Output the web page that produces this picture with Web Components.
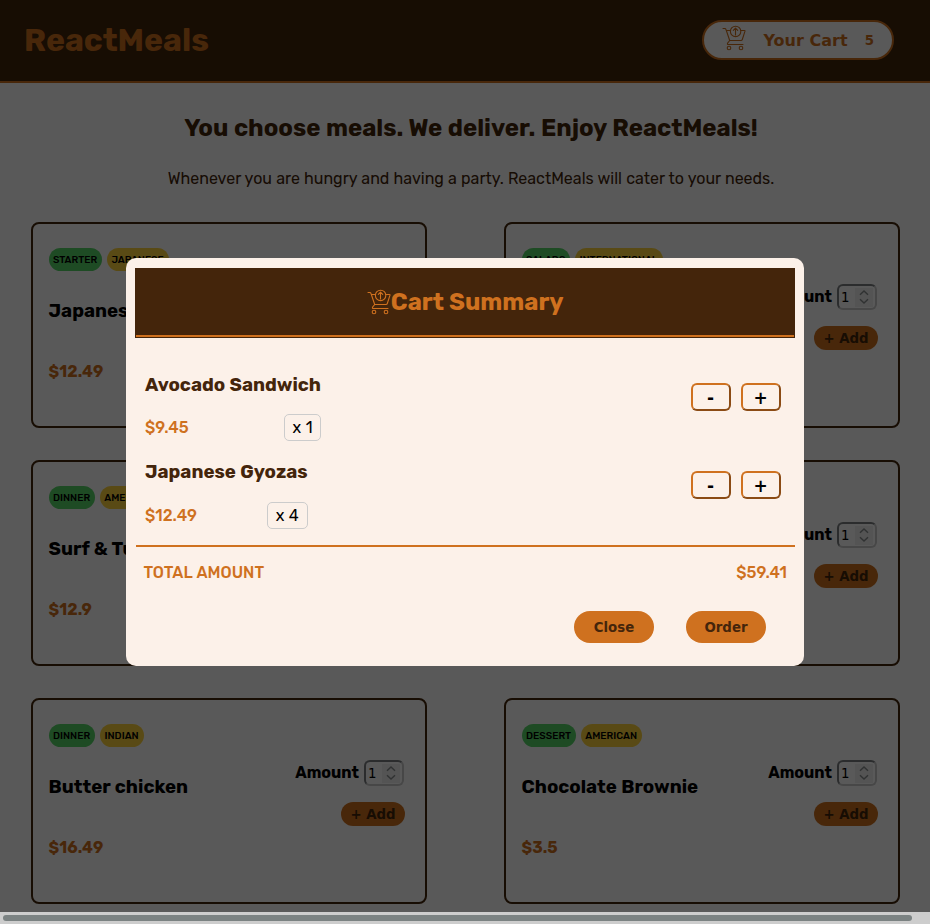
<!DOCTYPE html>
<html lang="en">
<head>
<meta charset="utf-8">
<title>ReactMeals</title>
<style>
html,body{margin:0;height:100%;overflow:hidden;background:#fff}
body{font-family:Rubik,Roboto,sans-serif;font-size:16px;line-height:1;--orange:#cf711f;--brown:#44250b;--cream:#fcf1e9;--ui:"DejaVu Sans",sans-serif}
</style>
</head>
<body>
<meals-app></meals-app>
<script>
const define=(name,html,after)=>{
  const t=document.createElement('template');
  t.innerHTML='<style>*{box-sizing:border-box}</style>'+html;
  customElements.define(name,class extends HTMLElement{
    constructor(){super();this.attachShadow({mode:'open'}).append(t.content.cloneNode(true));}
    connectedCallback(){if(after)after.call(this,this.shadowRoot);}
  });
};

define('cart-icon',`<style>:host{display:block;width:24px;height:26px;color:var(--orange);flex:none}svg{display:block}</style>
<svg width="24" height="26" viewBox="0 0 24 26" fill="none" stroke="currentColor" stroke-width="1.1" stroke-linecap="round" stroke-linejoin="round">
<path d="M1 3.5h1.7q1 0 1.3 1L7.7 15.5H19q1 0 1.3-1L23 6.2q.2-.7-.7-.7H19M4.4 5.5H8.3M7.7 15.5 5.6 18.2q-.6 1.3.7 1.3H21"/>
<circle cx="13.6" cy="6.4" r="5.2"/><path d="M13.5 9.9V3.4M11.3 5.4l2.2-2.2 2.2 2.2"/><circle cx="7" cy="23" r="1.8"/><circle cx="19" cy="23" r="1.8"/></svg>`);

define('meal-tag',`<style>:host{display:flex;height:23px;border-radius:12px;align-items:center;justify-content:center;background:#56d667;font-size:10px;font-weight:500;color:#000;white-space:nowrap}:host([kind=cuisine]){background:#ffd53c}</style><slot></slot>`);

define('amount-field',`<style>:host{display:flex;align-items:center;gap:5px;font-weight:700;color:#000}
.box{width:40px;height:26px;border:2px solid;border-color:#7b7f80 #cbcbcb #cbcbcb #7b7f80;border-radius:6px;display:flex;align-items:center;justify-content:space-between;padding:0 2px;font:13.333px var(--ui)}
.spin{width:18px;height:19px;background:#efefef;display:grid;place-items:center}</style>
<span>Amount</span><div class="box"><span>1</span><div class="spin"><svg width="10" height="14" viewBox="0 0 10 14" fill="none" stroke="#8b9091" stroke-width="1.4"><path d="M1 4.8 5 1l4 3.8M1 9.2 5 13l4-3.8"/></svg></div></div>`);

define('meal-card',`<style>:host{display:flex;justify-content:space-between;height:206px;border:2px solid var(--brown);border-radius:8px;background:#fff;padding:24px 20px 0 15.6px;box-sizing:border-box;white-space:nowrap}
.tags{display:flex;gap:5px}.name{font-size:18.72px;font-weight:700;color:#000;margin-top:30px;line-height:20px;word-spacing:.4px}.price{font-weight:700;color:var(--orange);margin-top:41px;line-height:20px;font-size:16px}
.side{display:flex;flex-direction:column;align-items:flex-end;padding-top:36px;gap:16px}amount-field{margin-right:1px}
button{width:64px;height:24px;border:0;border-radius:12px;background:var(--orange);color:var(--brown);font:700 13.333px/1 var(--ui);padding:1px 0 0;white-space:nowrap}</style>
<div><div class="tags"></div><div class="name"></div><div class="price"></div></div>
<div class="side"><amount-field></amount-field><button>+ Add</button></div>`,function(r){
  const [course,cw,cuisine,uw,name,price]=this.getAttribute('meal').split('|');
  const tag=(text,w,k)=>`<meal-tag kind="${k}" style="width:${w}px">${text}</meal-tag>`;
  r.querySelector('.tags').innerHTML=tag(course,cw,'course')+tag(cuisine,uw,'cuisine');
  r.querySelector('.name').textContent=name;
  r.querySelector('.price').textContent=price;
});

define('site-header',`<style>:host{display:flex;justify-content:space-between;align-items:center;height:83px;padding:0 36px 1px 24px;background:var(--brown);border-bottom:2px solid var(--orange);box-sizing:border-box;color:var(--orange)}
h1{margin:0;font-size:32px;line-height:36px}
button{width:192px;height:40px;border:2px solid var(--orange);border-radius:20px;background:#fff;color:inherit;display:flex;align-items:center;padding:0 18px;font:700 16px/1 var(--ui)}
.t{margin-left:17.5px;flex:1;text-align:left;padding-top:1px}.n{font-size:13.333px;padding-top:1px}cart-icon{margin-bottom:5px}</style>
<h1>ReactMeals</h1><button><cart-icon></cart-icon><span class="t">Your Cart</span><span class="n">5</span></button>`);

define('cart-row',`<style>:host{display:flex;justify-content:space-between;height:88px;padding:0 14px 0 9px;box-sizing:border-box;white-space:nowrap}
.name{font-size:18.72px;font-weight:700;color:var(--brown);height:20px;line-height:20px;padding-top:1px;word-spacing:.4px}
:host(:last-child) .name{padding-top:0}
.line{display:flex;justify-content:space-between;align-items:center;margin-top:20px}.price{font-size:16px;font-weight:500;color:var(--orange)}
.qty{height:27px;border:1px solid #ccc;border-radius:5px;display:flex;align-items:center;justify-content:center;font-size:16px;color:#000;word-spacing:.6px}
.btns{display:flex;gap:10px;padding-top:9px}button{width:40px;height:28px;background:transparent;border:2px solid;border-color:var(--orange) #8b4b14 #8b4b14 var(--orange);border-radius:6px;font:700 17px/1 var(--ui);color:#000;padding:2px 1px 0 0}</style>
<div class="l"><div class="name"></div><div class="line"><div class="price"></div><div class="qty"></div></div></div><div class="btns"><button>-</button><button>+</button></div>`,function(r){
  const [name,price,qty,qw]=this.getAttribute('item').split('|');
  r.querySelector('.name').textContent=name;
  r.querySelector('.price').textContent=price;
  const q=r.querySelector('.qty');q.style.width=qw+'px';q.textContent=qty;
});

define('cart-dialog',`<style>:host{display:block;width:678px;height:408px;background:var(--cream);border-radius:10px;padding:10px 9px;box-sizing:border-box}
header{height:70px;background:var(--brown);border:1px solid var(--brown)}
header div{height:68px;border-bottom:2px solid var(--orange);display:flex;align-items:center;justify-content:center;color:var(--orange);padding-left:1px}
h2{margin:0 0 0 -.5px;font-size:24px;line-height:28px}
.items{padding-top:35px;height:208px;margin-left:1px;border-bottom:2px solid var(--orange);margin-top:1px}
.total{display:flex;justify-content:space-between;padding:16px 8px 0 8.4px;color:var(--orange);font-weight:500;font-size:16px;line-height:20px;word-spacing:1px}
.acts{display:flex;justify-content:flex-end;gap:32px;padding:28px 29px 0 0}.acts button{width:80px;height:32px;border:0;border-radius:16px;background:var(--orange);color:var(--brown);font:700 13.333px/1 var(--ui);padding:1px 0 0}</style>
<header><div><cart-icon></cart-icon><h2>Cart Summary</h2></div></header>
<div class="items"><cart-row item="Avocado Sandwich|$9.45|x 1|37"></cart-row><cart-row item="Japanese Gyozas|$12.49|x 4|41"></cart-row></div>
<div class="total"><span>TOTAL AMOUNT</span><span>$59.41</span></div>
<div class="acts"><button>Close</button><button>Order</button></div>`);

define('meals-app',`<style>:host{display:grid;grid-template-rows:912px 12px;height:924px;overflow:hidden;position:relative}
.intro{display:flex;flex-direction:column;align-items:center;padding:31px 0 0 12px;color:var(--brown)}
h2{margin:0;font-size:24px;line-height:28px;word-spacing:.35px}p{margin:27px 0 0;font-size:16px;line-height:20px;word-spacing:.25px}
.grid{display:grid;grid-template-columns:396px 396px;gap:32px 77px;padding:33px 0 0 31px}
.shade{position:absolute;inset:0 0 12px 0;background:rgba(0,0,0,.65);padding:258px 0 0 126px}
.bar{background:#cdcdcd;padding:3px 18px 3px 3px}.bar div{height:6px;border-radius:3px;background:#7b8282}</style>
<div><site-header></site-header>
<div class="intro"><h2>You choose meals. We deliver. Enjoy ReactMeals!</h2><p>Whenever you are hungry and having a party. ReactMeals will cater to your needs.</p></div>
<div class="grid">
<meal-card meal="STARTER|53|JAPANESE|62|Japanese Gyozas|$12.49"></meal-card>
<meal-card meal="SALADS|48|INTERNATIONAL|88|Avocado Sandwich|$9.45"></meal-card>
<meal-card meal="DINNER|46|AMERICAN|61|Surf &amp; Turf|$12.9"></meal-card>
<meal-card meal="DINNER|46|AMERICAN|61|Burger|$9.99"></meal-card>
<meal-card meal="DINNER|46|INDIAN|44|Butter chicken|$16.49"></meal-card>
<meal-card meal="DESSERT|54|AMERICAN|61|Chocolate Brownie|$3.5"></meal-card>
</div></div>
<div class="bar"><div></div></div>
<div class="shade"><cart-dialog></cart-dialog></div>`);
</script>
</body>
</html>
